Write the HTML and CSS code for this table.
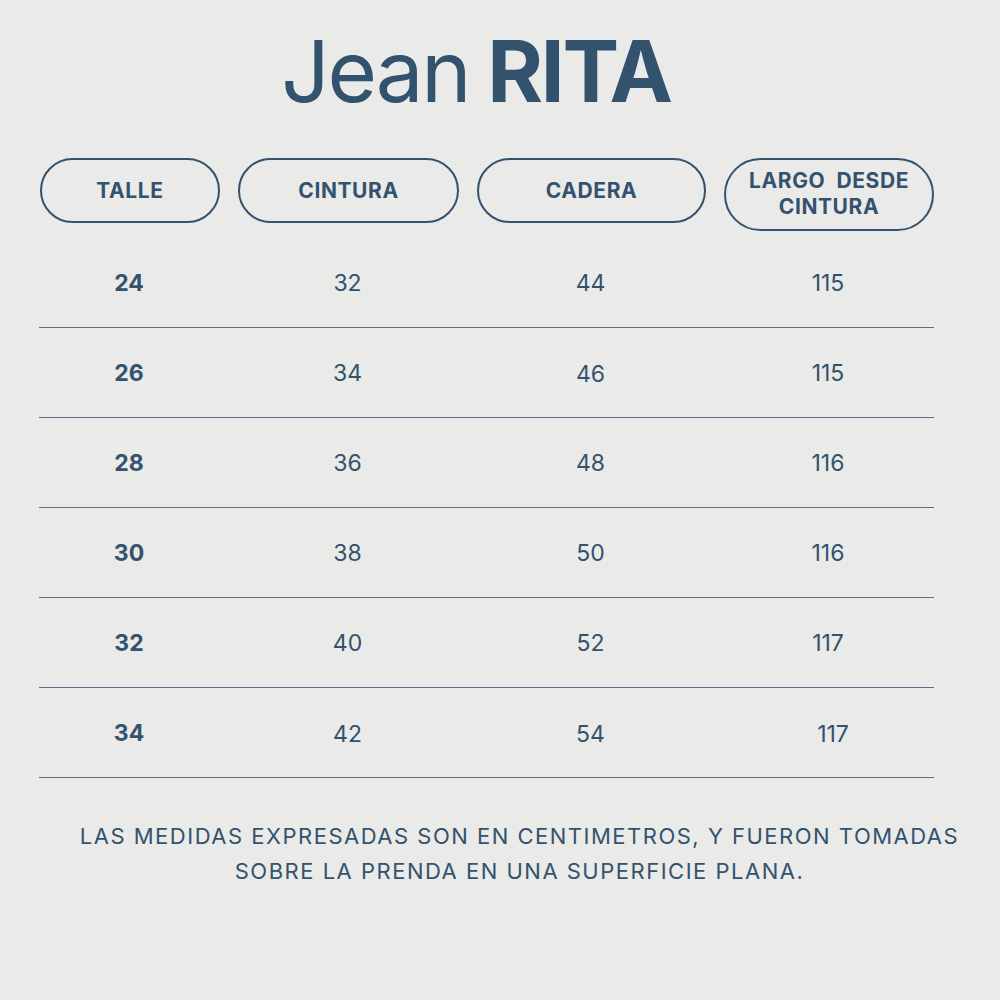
FILE: index.html
```html
<!DOCTYPE html>
<html lang="es">
<head>
<meta charset="utf-8">
<title>Jean RITA</title>
<link rel="stylesheet" href="styles.css">
</head>
<body>
<main class="page">
  <h1 class="title"><span class="light">Jean</span> <span class="bold">RITA</span></h1>
  <section class="table">
    <div class="grid head">
      <div class="pill">TALLE</div>
      <div class="pill">CINTURA</div>
      <div class="pill">CADERA</div>
      <div class="pill tall">LARGO&nbsp; DESDE<br>CINTURA</div>
    </div>
    <div class="grid row"><span class="size">24</span><span>32</span><span>44</span><span>115</span></div>
    <div class="grid row"><span class="size">26</span><span>34</span><span class="low">46</span><span>115</span></div>
    <div class="grid row"><span class="size">28</span><span>36</span><span>48</span><span>116</span></div>
    <div class="grid row"><span class="size">30</span><span>38</span><span>50</span><span>116</span></div>
    <div class="grid row"><span class="size">32</span><span>40</span><span>52</span><span>117</span></div>
    <div class="grid row"><span class="size">34</span><span class="low">42</span><span class="low">54</span><span class="low shift">117</span></div>
  </section>
  <p class="note">LAS MEDIDAS EXPRESADAS SON EN CENTIMETROS, Y FUERON TOMADAS<br>SOBRE LA PRENDA EN UNA SUPERFICIE PLANA.</p>
</main>
</body>
</html>
```

FILE: styles.css
```css
html, body {
  margin: 0;
  padding: 0;
  background: #eaeae8;
}
body {
  width: 1000px;
  height: 1000px;
  font-family: Inter, "Liberation Sans", sans-serif;
  color: #33526e;
}
.page {
  padding-top: 29px;
}
.title {
  margin: 0 48px 0 0;
  text-align: center;
  font-size: 85px;
  line-height: 1;
  letter-spacing: -2.2px;
  color: #33526e;
}
.title .light { font-weight: 400; }
.title .bold { font-weight: 700; }
.table {
  margin: 44px 0 0 40px;
  width: 894px;
}
.grid {
  display: grid;
  grid-template-columns: 180px 221px 229px 210px;
  column-gap: 18px;
  align-items: center;
}
.head {
  align-items: start;
  margin-bottom: 7px;
}
.pill {
  box-sizing: border-box;
  height: 65px;
  border: 2px solid #33526e;
  border-radius: 40px;
  display: flex;
  align-items: center;
  justify-content: center;
  text-align: center;
  font-weight: 700;
  font-size: 21px;
  letter-spacing: 0.6px;
  line-height: 22px;
}
.pill.tall {
  height: 73px;
  line-height: 26px;
  padding-bottom: 2px;
}
.row {
  height: 89px;
  border-bottom: 1.5px solid #5a6f85;
  margin-left: -1px;
  font-size: 23px;
  font-weight: 400;
  text-align: center;
}
.row span { display: block; }
.row .size { font-weight: 700; }
.row .low { padding-top: 3px; }
.row .shift { padding-left: 10px; }
.note {
  margin: 41px 0 0 0;
  padding-left: 39px;
  text-align: center;
  font-size: 22px;
  line-height: 35px;
  letter-spacing: 1.5px;
}
```
